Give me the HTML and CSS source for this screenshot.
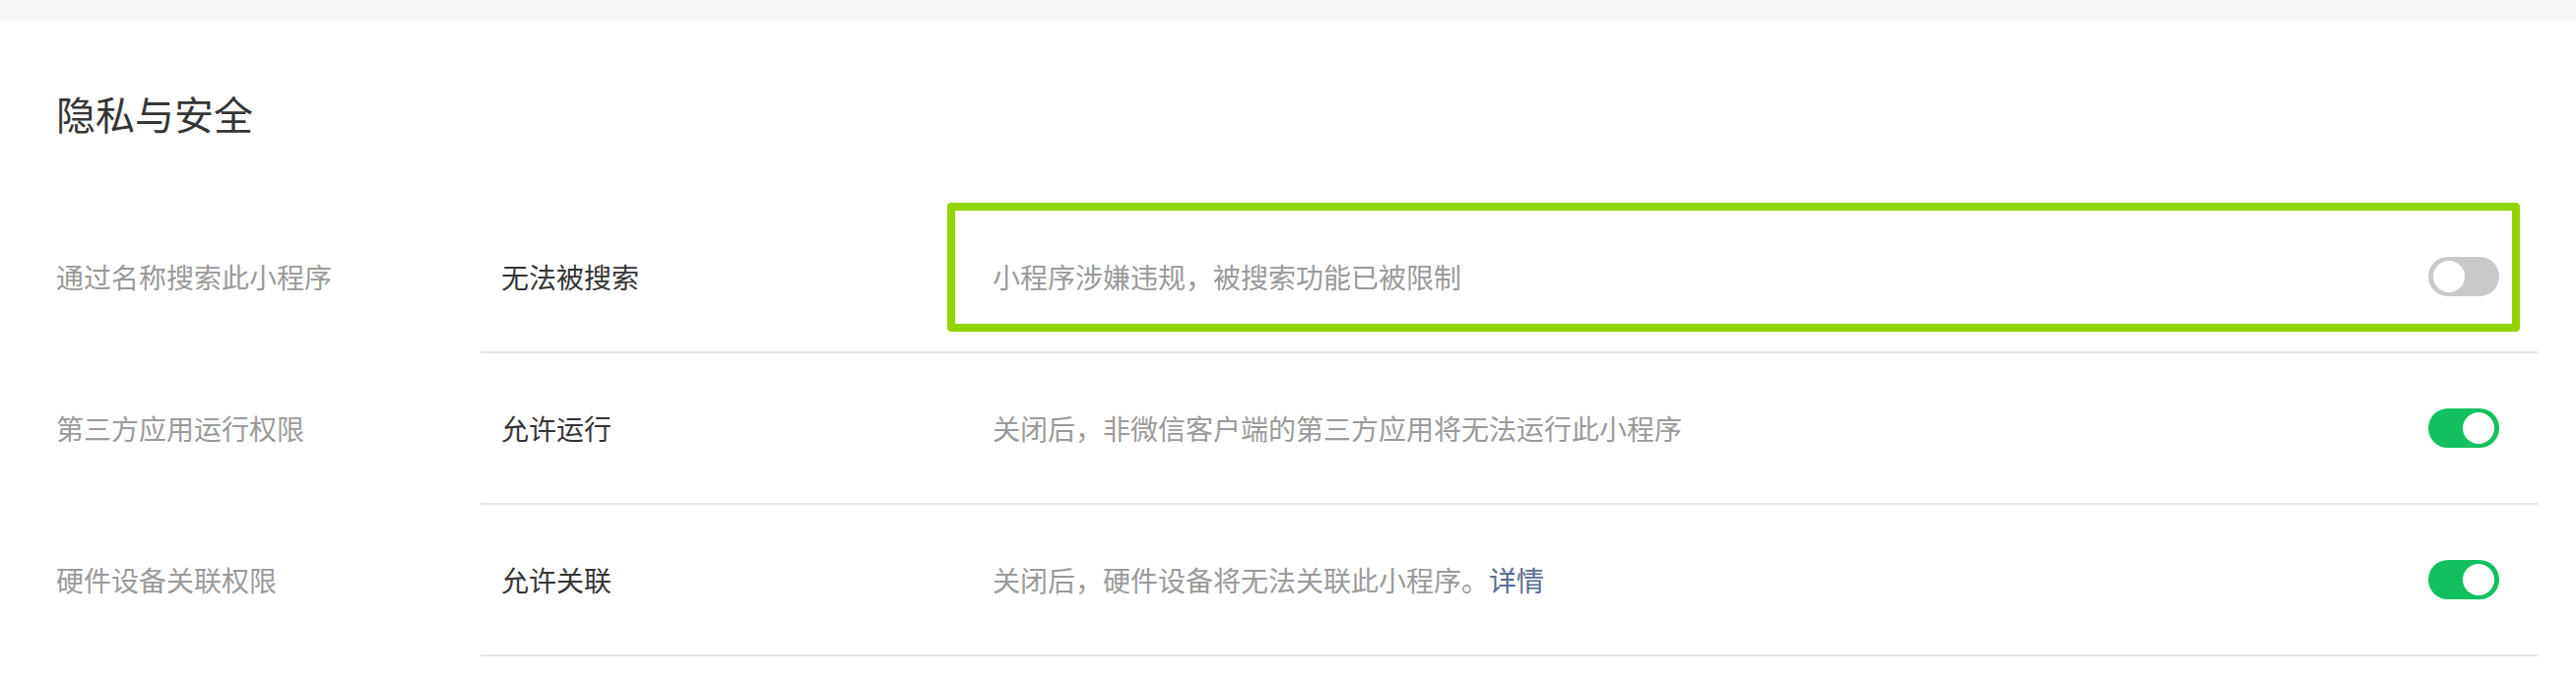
FILE: index.html
```html
<!DOCTYPE html>
<html lang="zh-CN">
<head>
  <meta charset="UTF-8" />
  <meta name="viewport" content="width=device-width, initial-scale=1.0"/>
  <title>隐私与安全</title>
  <link rel="stylesheet" href="styles.css">
</head>
<body>

  <!-- Privacy card -->
  <section class="card">
    <h2 class="card-title">隐私与安全</h2>

    <div class="setting">
      <div class="setting-label">通过名称搜索此小程序</div>
      <div class="setting-body">
        <div class="setting-value">无法被搜索</div>
        <div class="setting-detail highlight">
          <span class="setting-desc">小程序涉嫌违规，被搜索功能已被限制</span>
          <span class="switch"></span>
        </div>
      </div>
    </div>

    <div class="setting">
      <div class="setting-label">第三方应用运行权限</div>
      <div class="setting-body">
        <div class="setting-value">允许运行</div>
        <div class="setting-detail">
          <span class="setting-desc">关闭后，非微信客户端的第三方应用将无法运行此小程序</span>
          <span class="switch on"></span>
        </div>
      </div>
    </div>

    <div class="setting">
      <div class="setting-label">硬件设备关联权限</div>
      <div class="setting-body">
        <div class="setting-value">允许关联</div>
        <div class="setting-detail">
          <span class="setting-desc">关闭后，硬件设备将无法关联此小程序。<a href="#" class="link">详情</a></span>
          <span class="switch on"></span>
        </div>
      </div>
    </div>
  </section>

</body>
</html>
```

FILE: styles.css
```css
* { box-sizing: border-box; margin: 0; padding: 0; }
body {
  font-family: "Noto Sans CJK SC", "Noto Sans", sans-serif;
  background: #f6f7f9;
  padding-top: 21px;
  color: #353535;
}

.card {
  background: #fff;
  border-radius: 4px;
  padding: 66px 38px 40px 57px;
}

.card-title {
  font-size: 40px;
  line-height: 56px;
  font-weight: normal;
  color: #353535;
  margin-bottom: 62px;
}

.setting {
  display: flex;
  font-size: 28px;
  line-height: 40px;
}

.setting-label {
  width: 431px;
  display: flex;
  align-items: center;
  padding-bottom: 2px;
  color: #9a9a9a;
}

.setting-body {
  flex: 1;
  height: 154px;
  display: flex;
  align-items: center;
  border-bottom: 2px solid #e6e6eb;
}

.setting-value {
  width: 520px;
  padding-left: 21px;
  color: #353535;
}

.setting-detail {
  flex: 1;
  align-self: stretch;
  display: flex;
  align-items: center;
  padding-right: 40px;
  position: relative;
}

.setting-desc {
  flex: 1;
  color: #9a9a9a;
}

.link {
  color: #576b95;
  text-decoration: none;
}

/* green annotation frame over the first row */
.highlight::after {
  content: "";
  position: absolute;
  top: 1px;
  bottom: 20px;
  left: -46px;
  right: 19px;
  border: 8px solid #91d400;
  border-radius: 4px;
  pointer-events: none;
}

.switch {
  width: 72px;
  height: 40px;
  border-radius: 20px;
  background: #c9c9c9;
  position: relative;
  flex-shrink: 0;
}

.switch::before {
  content: "";
  position: absolute;
  top: 4px;
  left: 5px;
  width: 32px;
  height: 32px;
  border-radius: 50%;
  background: #fff;
}

.switch.on {
  background: #12c15d;
}

.switch.on::before {
  left: 35px;
}
```
